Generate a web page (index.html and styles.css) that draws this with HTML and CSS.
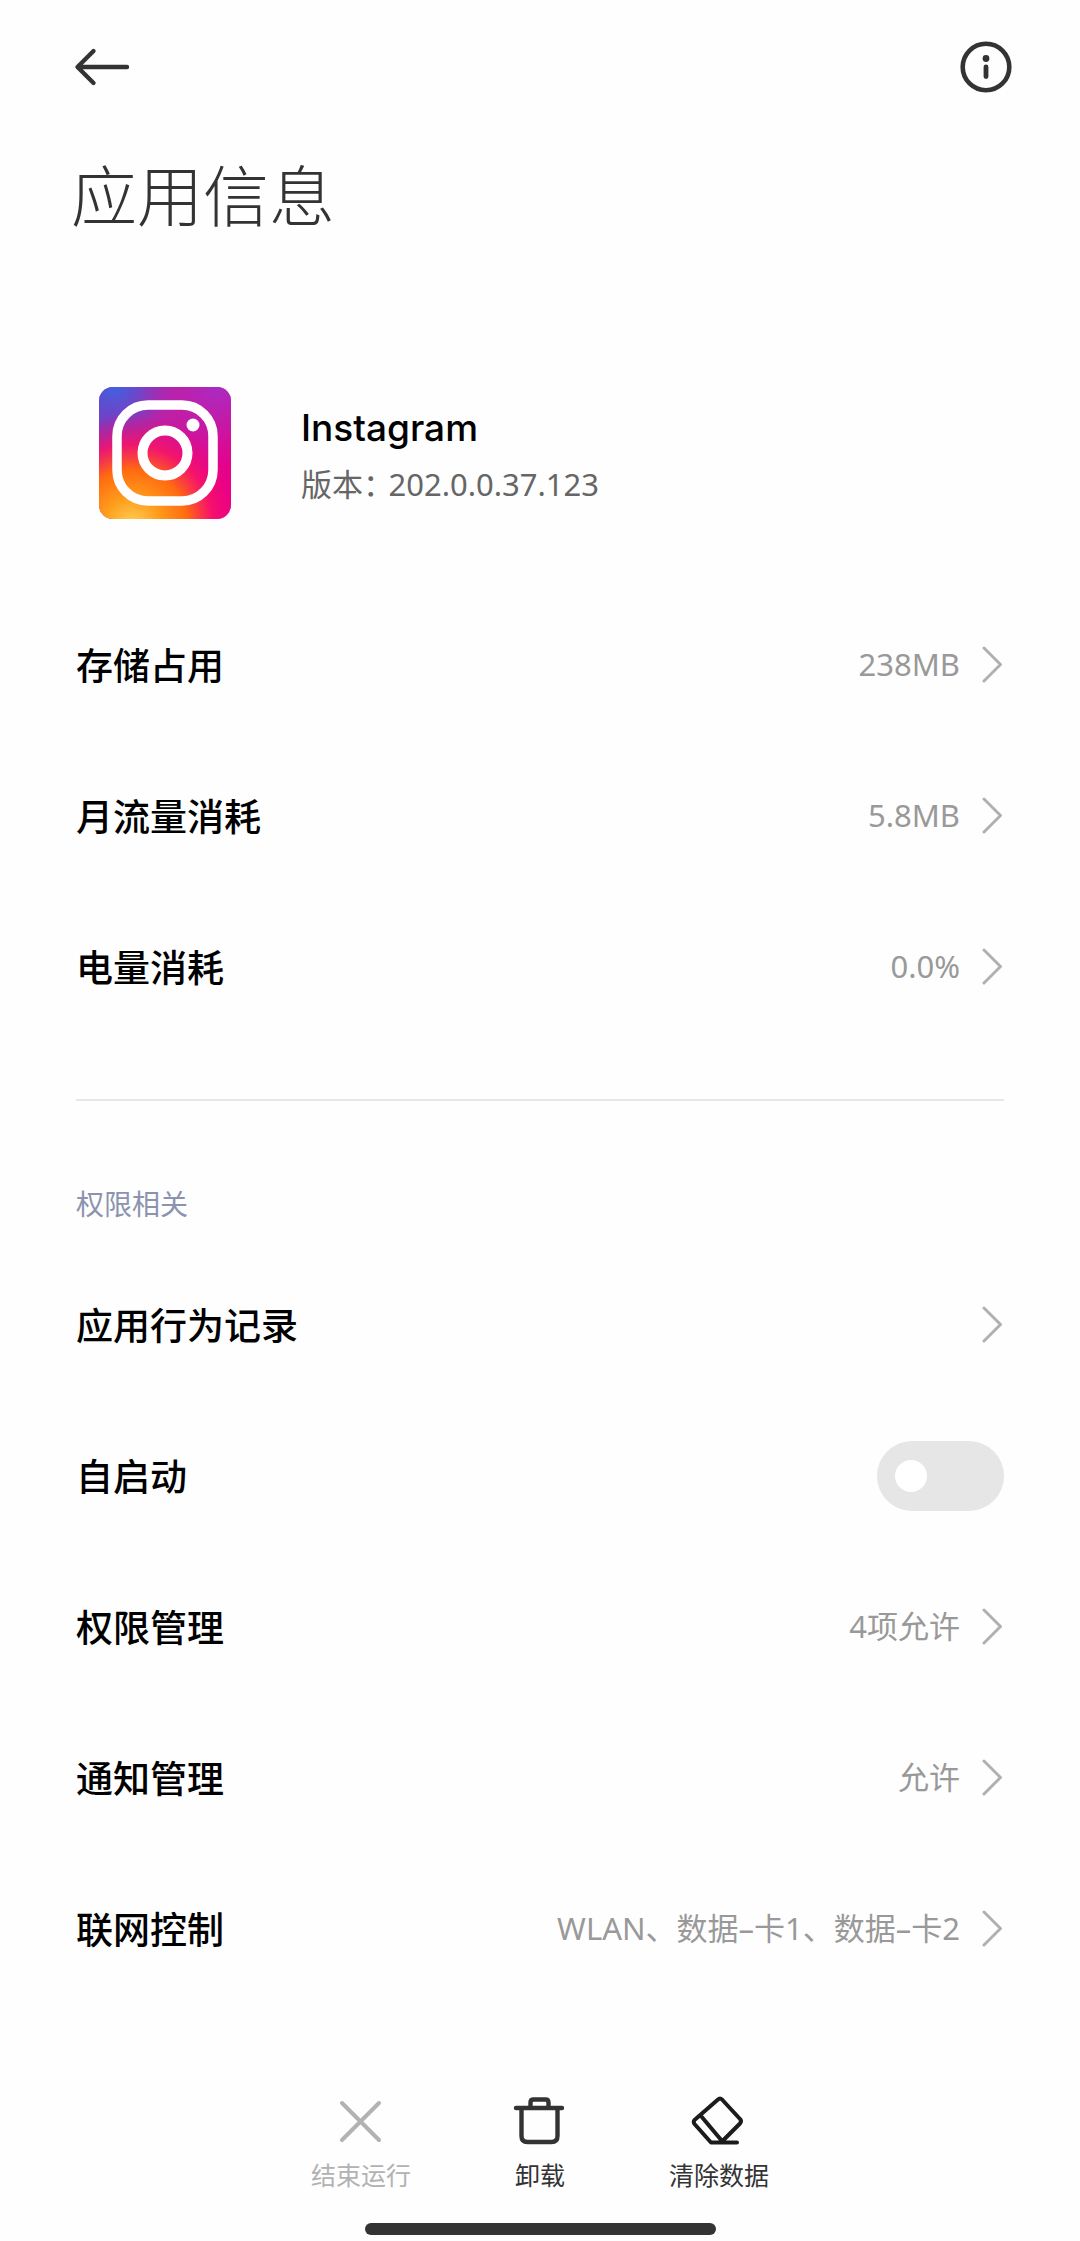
FILE: index.html
```html
<!DOCTYPE html>
<html lang="zh-CN">
<head>
<meta charset="utf-8">
<meta name="viewport" content="width=device-width, initial-scale=1">
<title>应用信息</title>
<link rel="stylesheet" href="styles.css">
</head>
<body>
<svg class="defs" width="0" height="0" aria-hidden="true">
  <symbol id="chevron" viewBox="0 0 21 37">
    <path d="M2 2 18.500 18.500 2 35" fill="none" stroke="#b0b0b0" stroke-width="3" stroke-linecap="round" stroke-linejoin="round"/>
  </symbol>
</svg>

<header class="topbar">
  <button class="icon-button" type="button" aria-label="返回">
    <svg width="56" height="50" viewBox="0 0 56 50" fill="none" stroke="#333" stroke-width="4.400" stroke-linecap="round" stroke-linejoin="round">
      <path d="M19.500 9 3.500 25 19.500 41M4 25H53"/>
    </svg>
  </button>
  <button class="icon-button" type="button" aria-label="详情">
    <svg width="52" height="52" viewBox="0 0 52 52">
      <circle cx="26" cy="26" r="23.300" fill="none" stroke="#333" stroke-width="4.600"/>
      <circle cx="26" cy="17.500" r="3.400" fill="#333"/>
      <path d="M26 26V35.500" stroke="#333" stroke-width="4.800" stroke-linecap="round"/>
    </svg>
  </button>
</header>

<main class="content">
  <h1 class="title">应用信息</h1>

  <section class="app">
    <svg class="app-icon" width="132" height="132" viewBox="0 0 132 132" aria-hidden="true">
      <defs>
        <linearGradient id="base" x1="0" y1="0" x2="1" y2="0.600">
          <stop offset="0" stop-color="#5a45cc"/>
          <stop offset="0.450" stop-color="#c020a0"/>
          <stop offset="1" stop-color="#e6008c"/>
        </linearGradient>
        <radialGradient id="blue" cx="0.120" cy="0" r="0.500">
          <stop offset="0" stop-color="#3f62e0"/>
          <stop offset="1" stop-color="#8a35c0" stop-opacity="0"/>
        </radialGradient>
        <radialGradient id="violet" cx="0.900" cy="0" r="0.600">
          <stop offset="0" stop-color="#a82cc4"/>
          <stop offset="1" stop-color="#c41aa8" stop-opacity="0"/>
        </radialGradient>
        <radialGradient id="warm" cx="0.250" cy="1.050" r="0.850">
          <stop offset="0" stop-color="#ffd257"/>
          <stop offset="0.250" stop-color="#ff9d1c"/>
          <stop offset="0.500" stop-color="#ff6a10"/>
          <stop offset="0.720" stop-color="#fa1464" stop-opacity="0.850"/>
          <stop offset="1" stop-color="#f0007c" stop-opacity="0"/>
        </radialGradient>
      </defs>
      <rect width="132" height="132" rx="14" fill="url(#base)"/>
      <rect width="132" height="132" rx="14" fill="url(#blue)"/>
      <rect width="132" height="132" rx="14" fill="url(#violet)"/>
      <rect width="132" height="132" rx="14" fill="url(#warm)"/>
      <rect x="18" y="18" width="96" height="96" rx="31" fill="none" stroke="#fff" stroke-width="9.500"/>
      <circle cx="66" cy="66" r="22.500" fill="none" stroke="#fff" stroke-width="10"/>
      <circle cx="94" cy="38" r="6.500" fill="#fff"/>
    </svg>
    <div class="app-text">
      <h2 class="app-name">Instagram</h2>
      <p class="app-version">版本：<span class="version-number">202.0.0.37.123</span></p>
    </div>
  </section>

  <nav class="rows">
    <a class="row" href="#storage"><span class="label">存储占用</span><span class="value">238MB</span><svg class="chevron"><use href="#chevron"/></svg></a>
    <a class="row" href="#traffic"><span class="label">月流量消耗</span><span class="value">5.8MB</span><svg class="chevron"><use href="#chevron"/></svg></a>
    <a class="row" href="#battery"><span class="label">电量消耗</span><span class="value">0.0%</span><svg class="chevron"><use href="#chevron"/></svg></a>
  </nav>

  <hr class="divider">

  <h2 class="section-title">权限相关</h2>
  <section class="rows">
    <a class="row" href="#behavior"><span class="label">应用行为记录</span><svg class="chevron"><use href="#chevron"/></svg></a>
    <label class="row"><span class="label">自启动</span><input class="switch" type="checkbox" role="switch"></label>
    <a class="row" href="#permissions"><span class="label">权限管理</span><span class="value">4项允许</span><svg class="chevron"><use href="#chevron"/></svg></a>
    <a class="row" href="#notifications"><span class="label">通知管理</span><span class="value">允许</span><svg class="chevron"><use href="#chevron"/></svg></a>
    <a class="row" href="#network"><span class="label">联网控制</span><span class="value">WLAN、数据–卡1、数据–卡2</span><svg class="chevron"><use href="#chevron"/></svg></a>
  </section>
</main>

<footer class="bottom">
  <div class="actions">
    <button class="action" type="button" disabled>
      <svg width="60" height="60" viewBox="0 0 60 60" fill="none" stroke="#b2b2b2" stroke-width="4" stroke-linecap="round">
        <path d="M11 13 48 50M48 13 11 50"/>
      </svg>
      <span>结束运行</span>
    </button>
    <button class="action" type="button">
      <svg width="60" height="60" viewBox="0 0 60 60" fill="none" stroke="#333" stroke-width="4.400" stroke-linecap="round" stroke-linejoin="round">
        <path d="M6 18H52M11.500 18V46Q11.500 52 17.500 52H41.500Q47.500 52 47.500 46V18M20.500 17V12.500Q20.500 9.500 23.500 9.500H35.500Q38.500 9.500 38.500 12.500V17"/>
      </svg>
      <span>卸载</span>
    </button>
    <button class="action" type="button">
      <svg width="60" height="60" viewBox="0 0 60 60" fill="none" stroke="#1c1c1c" stroke-width="4" stroke-linecap="round" stroke-linejoin="round">
        <path d="M29 9.500Q31 7.500 33 9.500L51 29Q53 31 51 33.500L32 52.500M29 9.500 5.500 30Q4 32 5.500 34L22 52.500H48M12 26 33 51"/>
      </svg>
      <span>清除数据</span>
    </button>
  </div>
  <div class="home-indicator"></div>
</footer>
</body>
</html>
```
FILE: styles.css
```css
* {
  box-sizing: border-box;
}

body {
  margin: 0;
  min-height: 100vh;
  display: flex;
  flex-direction: column;
  background: #fefefe;
  color: #000;
  font-family: "Noto Sans", "Noto Sans CJK SC", sans-serif;
}

h1,
h2,
p {
  margin: 0;
}

button {
  padding: 0;
  border: 0;
  background: none;
  color: inherit;
  font: inherit;
}

svg {
  display: block;
  flex: none;
}

.defs {
  position: absolute;
}

.topbar {
  display: flex;
  justify-content: space-between;
  align-items: center;
  height: 133px;
  padding: 0 68px 0 74px;
}

.content {
  flex: 1;
  padding: 0 76px;
}

.title {
  margin: 19px 0 0 -5px;
  font-family: "Noto Sans CJK SC", sans-serif;
  font-size: 66px;
  font-weight: 300;
  line-height: 80px;
  color: #333;
}

.app {
  display: flex;
  gap: 70px;
  margin: 155px 0 70px 23px;
}

.app-text {
  padding-top: 13px;
}

.app-name {
  font-family: Inter, sans-serif;
  font-size: 37px;
  font-weight: 500;
  line-height: 56px;
}

.app-version {
  font-size: 31px;
  line-height: 56px;
  color: #666;
  font-feature-settings: "halt";
}

.version-number {
  margin-left: 10px;
}

.row {
  display: flex;
  align-items: center;
  height: 151px;
  color: inherit;
  text-decoration: none;
}

.label,
.value {
  padding-bottom: 2px;
  line-height: 50px;
}

.label {
  flex: 1;
  font-family: "Noto Sans CJK SC", sans-serif;
  font-size: 37px;
  font-weight: 500;
}

.value {
  font-size: 31px;
  color: #999;
}

.chevron {
  width: 21px;
  height: 37px;
  margin: 0 1px 0 22px;
}

.divider {
  height: 2px;
  margin: 57px 0 0;
  border: 0;
  background: #e6e6e6;
}

.section-title {
  margin: 83px 0 25px;
  font-size: 28px;
  font-weight: 400;
  line-height: 40px;
  color: #8c93b0;
}

.switch {
  appearance: none;
  display: flex;
  align-items: center;
  width: 127px;
  height: 70px;
  margin: 0;
  padding: 0 18px;
  border-radius: 35px;
  background: #e6e6e6;
}

.switch::before {
  content: "";
  width: 32px;
  height: 32px;
  border-radius: 50%;
  background: #fff;
}

.switch:checked {
  justify-content: flex-end;
  background: #0d84ff;
}

.bottom {
  padding-bottom: 6px;
}

.actions {
  display: flex;
  justify-content: center;
}

.action {
  display: flex;
  flex-direction: column;
  align-items: center;
  gap: 7px;
  width: 179px;
  font-size: 25px;
  line-height: 36px;
  color: #333;
}

.action:disabled {
  color: #b2b2b2;
}

.home-indicator {
  width: 351px;
  height: 12px;
  margin: 30px auto 0;
  border-radius: 6px;
  background: #333;
}
```
